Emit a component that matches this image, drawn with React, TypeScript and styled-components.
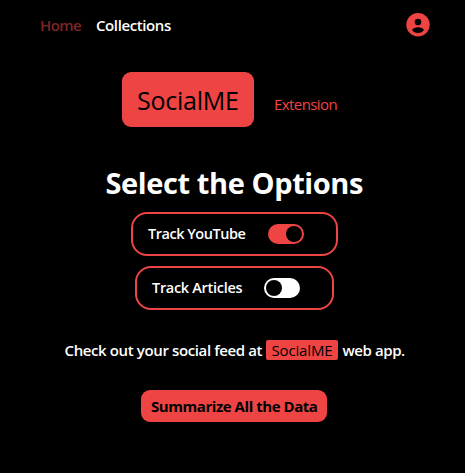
import React, { useState } from "react";
import styled, { createGlobalStyle } from "styled-components";

const red = "#ef4444";

const GlobalStyle = createGlobalStyle`
  *, *::before, *::after { box-sizing: border-box; }
  body {
    margin: 0;
    background: #000;
    color: #fff;
    font-family: "Segoe UI", "Open Sans", "Noto Sans", sans-serif;
    font-size: 15px;
    line-height: 24px;
  }
`;

const Page = styled.div`
  min-height: 473px;
  display: flex;
  flex-direction: column;
  align-items: center;
  background: #000;
`;

const Header = styled.header`
  align-self: stretch;
  height: 49px;
  padding: 0 35px 0 40px;
  display: flex;
  align-items: center;
  justify-content: space-between;
`;

const Nav = styled.nav`
  display: flex;
  gap: 15px;
  padding-top: 1px;
`;

const NavLink = styled.a<{ $active?: boolean; $width: number; $spacing: number }>`
  width: ${(p) => p.$width}px;
  letter-spacing: ${(p) => p.$spacing}px;
  font-weight: 600;
  white-space: nowrap;
  text-decoration: none;
  color: ${(p) => (p.$active ? "#7f2424" : "#fff")};
`;

const Avatar = styled.svg`
  width: 24px;
  height: 24px;
  display: block;
`;

const Brand = styled.div`
  margin-top: 23px;
  margin-right: 5px;
  display: flex;
  align-items: center;
  gap: 20px;
`;

const Logo = styled.div`
  width: 132px;
  height: 55px;
  padding-left: 15px;
  border-radius: 9px;
  background: ${red};
  color: #000;
  font-size: 25px;
  font-weight: 500;
  line-height: 57px;
  letter-spacing: -0.25px;
  white-space: nowrap;
`;

const Tagline = styled.span`
  width: 64px;
  padding-top: 9px;
  color: ${red};
  letter-spacing: -0.58px;
  white-space: nowrap;
`;

const Title = styled.h1`
  margin: 38px 0 0 3px;
  width: 257px;
  height: 37px;
  font-size: 29px;
  line-height: 36px;
  font-weight: 700;
  letter-spacing: -0.4px;
  white-space: nowrap;
`;

const Options = styled.div`
  margin: 10px 0 0 4px;
  display: flex;
  flex-direction: column;
  align-items: center;
  gap: 10px;
`;

const Option = styled.label<{ $width: number }>`
  width: ${(p) => p.$width}px;
  height: 44px;
  padding: 0 32px 0 15px;
  border: 2px solid ${red};
  border-radius: 16px;
  display: flex;
  align-items: center;
  justify-content: space-between;
`;

const OptionLabel = styled.span<{ $spacing: number }>`
  padding-bottom: 1px;
  font-size: 14.5px;
  font-weight: 600;
  letter-spacing: ${(p) => p.$spacing}px;
  white-space: nowrap;
`;

const Switch = styled.button<{ $on: boolean }>`
  width: 36px;
  height: 20px;
  padding: 2px;
  border: 0;
  border-radius: 10px;
  display: flex;
  justify-content: ${(p) => (p.$on ? "flex-end" : "flex-start")};
  background: ${(p) => (p.$on ? red : "#fff")};
`;

const Knob = styled.span`
  width: 16px;
  height: 16px;
  border-radius: 50%;
  background: #000;
`;

const Message = styled.p`
  margin: 28px 0 0 5px;
  display: flex;
  align-items: center;
  font-weight: 600;
  white-space: nowrap;
`;

const Phrase = styled.span<{ $width: number; $spacing: number }>`
  width: ${(p) => p.$width}px;
  letter-spacing: ${(p) => p.$spacing}px;
`;

const Badge = styled.span`
  width: 72px;
  height: 20px;
  margin-right: 5px;
  padding-left: 6px;
  border-radius: 2px;
  background: ${red};
  color: #000;
  font-weight: 400;
  line-height: 20px;
  letter-spacing: -0.15px;
`;

const SummaryButton = styled.button`
  width: 186px;
  height: 32px;
  margin: 28px 0 0 3px;
  padding: 0 0 0 10px;
  border: 0;
  border-radius: 9px;
  background: ${red};
  color: #000;
  font: inherit;
  font-weight: 700;
  text-align: left;
  letter-spacing: -0.45px;
  white-space: nowrap;
`;

interface TrackOptionProps {
  label: string;
  width: number;
  spacing: number;
  initial: boolean;
}

function TrackOption({ label, width, spacing, initial }: TrackOptionProps) {
  const [on, setOn] = useState(initial);
  return (
    <Option $width={width}>
      <OptionLabel $spacing={spacing}>{label}</OptionLabel>
      <Switch $on={on} role="switch" aria-checked={on} aria-label={label} onClick={() => setOn(!on)}>
        <Knob />
      </Switch>
    </Option>
  );
}

export default function App() {
  return (
    <Page>
      <GlobalStyle />
      <Header>
        <Nav>
          <NavLink $active $width={41} $spacing={-0.6}>Home</NavLink>
          <NavLink $width={76} $spacing={-0.4}>Collections</NavLink>
        </Nav>
        <Avatar viewBox="0 0 24 24" aria-label="Account">
          <circle cx="12" cy="11.8" r="11.7" fill={red} />
          <circle cx="12" cy="9" r="3.3" fill="#000" />
          <path d="M6 16.8C7.2 15.1 9.3 14.2 12 14.2s4.8.9 6 2.6c-1.3 2.1-3.5 3.2-6 3.2s-4.7-1.1-6-3.2Z" fill="#000" />
        </Avatar>
      </Header>
      <Brand>
        <Logo>SocialME</Logo>
        <Tagline>Extension</Tagline>
      </Brand>
      <Title>Select the Options</Title>
      <Options>
        <TrackOption label="Track YouTube" width={207} spacing={-0.48} initial />
        <TrackOption label="Track Articles" width={199} spacing={-0.3} initial={false} />
      </Options>
      <Message>
        <Phrase $width={201} $spacing={-0.38}>Check out your social feed at</Phrase>
        <Badge>SocialME</Badge>
        <Phrase $width={63} $spacing={-0.42}>web app.</Phrase>
      </Message>
      <SummaryButton>Summarize All the Data</SummaryButton>
    </Page>
  );
}
